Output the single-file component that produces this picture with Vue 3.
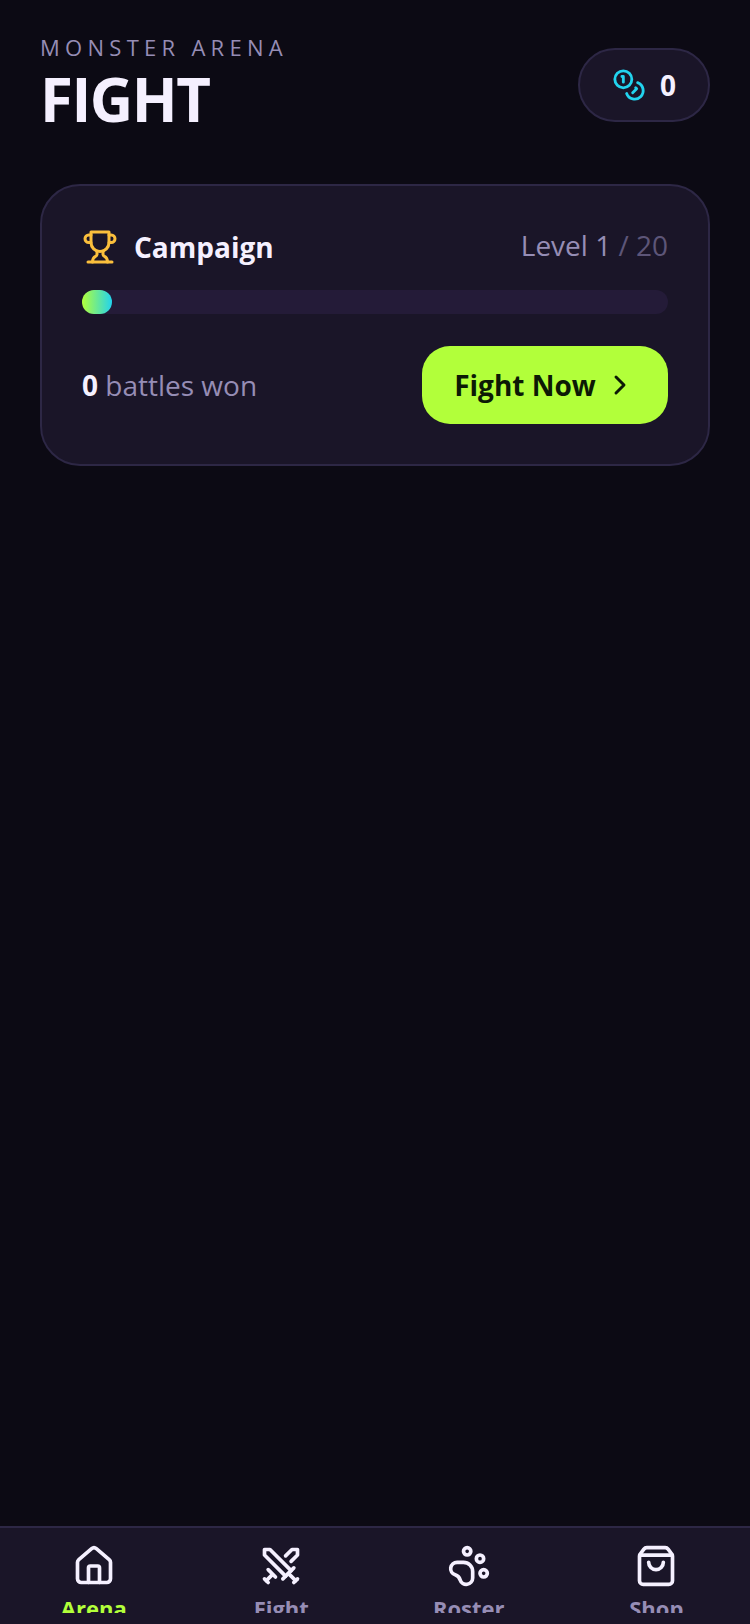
<script setup>
const tabs = [
  { label: "Arena", icon: "home", active: true },
  { label: "Fight", icon: "swords" },
  { label: "Roster", icon: "paw" },
  { label: "Shop", icon: "bag" },
];
</script>

<template>
  <div class="page">
    <main class="main">
      <header class="head">
        <div>
          <div class="eyebrow">MONSTER ARENA</div>
          <h1 class="title">FIGHT</h1>
        </div>
        <div class="coins">
          <svg class="coin-icon" viewBox="0 0 24 24" fill="none" stroke="currentColor" stroke-width="2" stroke-linecap="round" stroke-linejoin="round">
            <circle cx="8" cy="8" r="6" />
            <path d="M18.09 10.37A6 6 0 1 1 10.34 18" />
            <path d="M7 6h1v4" />
            <path d="m16.71 13.88.7.71-2.82 2.82" />
          </svg>
          <span>0</span>
        </div>
      </header>

      <section class="card">
        <div class="card-top">
          <div class="campaign">
            <svg class="trophy" viewBox="0 0 24 24" fill="none" stroke="currentColor" stroke-width="2" stroke-linecap="round" stroke-linejoin="round">
              <path d="M6 9H4.5a2.5 2.5 0 0 1 0-5H6" />
              <path d="M18 9h1.5a2.5 2.5 0 0 0 0-5H18" />
              <path d="M4 22h16" />
              <path d="M10 14.66V17c0 .55-.47.98-.97 1.21C7.85 18.75 7 20.24 7 22" />
              <path d="M14 14.66V17c0 .55.47.98.97 1.21C16.15 18.75 17 20.24 17 22" />
              <path d="M18 2H6v7a6 6 0 0 0 12 0V2Z" />
            </svg>
            <span>Campaign</span>
          </div>
          <div class="level">Level 1 <span class="of">/ 20</span></div>
        </div>

        <div class="track"><div class="fill"></div></div>

        <div class="card-bottom">
          <div class="won"><b>0</b> battles won</div>
          <button class="fight-btn">
            Fight Now
            <svg class="chev" viewBox="0 0 24 24" fill="none" stroke="currentColor" stroke-width="2.2" stroke-linecap="round" stroke-linejoin="round">
              <path d="m9 18 6-6-6-6" />
            </svg>
          </button>
        </div>
      </section>
    </main>

    <nav class="nav">
      <div class="tabs">
        <div v-for="tab in tabs" :key="tab.label" class="tab" :class="{ active: tab.active }">
          <svg class="tab-icon" viewBox="0 0 24 24" fill="none" stroke="currentColor" stroke-width="2" stroke-linecap="round" stroke-linejoin="round">
            <template v-if="tab.icon === 'home'">
              <path d="M15 21v-8a1 1 0 0 0-1-1h-4a1 1 0 0 0-1 1v8" />
              <path d="M3 10a2 2 0 0 1 .709-1.528l7-5.999a2 2 0 0 1 2.582 0l7 5.999A2 2 0 0 1 21 10v9a2 2 0 0 1-2 2H5a2 2 0 0 1-2-2z" />
            </template>
            <template v-else-if="tab.icon === 'swords'">
              <polyline points="14.5 17.5 3 6 3 3 6 3 17.5 14.5" />
              <line x1="13" y1="19" x2="19" y2="13" />
              <line x1="16" y1="16" x2="20" y2="20" />
              <line x1="19" y1="21" x2="21" y2="19" />
              <polyline points="14.5 6.5 18 3 21 3 21 6 17.5 9.5" />
              <line x1="5" y1="14" x2="9" y2="18" />
              <line x1="7" y1="17" x2="4" y2="20" />
              <line x1="3" y1="19" x2="5" y2="21" />
            </template>
            <template v-else-if="tab.icon === 'paw'">
              <circle cx="11" cy="4" r="2" />
              <circle cx="18" cy="8" r="2" />
              <circle cx="20" cy="16" r="2" />
              <path d="M9 10a5 5 0 0 1 5 5v3.5a3.5 3.5 0 0 1-6.84 1.045Q6.52 17.48 4.46 16.84A3.5 3.5 0 0 1 5.5 10Z" />
            </template>
            <template v-else>
              <path d="M16 10a4 4 0 0 1-8 0" />
              <path d="M3.103 6.034h17.794" />
              <path d="M3.4 5.467a2 2 0 0 0-.4 1.2V20a2 2 0 0 0 2 2h14a2 2 0 0 0 2-2V6.667a2 2 0 0 0-.4-1.2l-2-2.667A2 2 0 0 0 17 2H7a2 2 0 0 0-1.6.8z" />
            </template>
          </svg>
          <span class="tab-label">{{ tab.label }}</span>
        </div>
      </div>
    </nav>
  </div>
</template>

<style>
html,
body {
  margin: 0;
  background: #0c0a14;
}
</style>

<style scoped>
.page {
  width: 750px;
  height: 1624px;
  display: flex;
  flex-direction: column;
  background: #0c0a14;
  font-family: "Open Sans", "Noto Sans", sans-serif;
  color: #f5f0ff;
  overflow: hidden;
}
.main {
  flex: 1;
  padding: 32px 40px 0;
}
.head {
  display: flex;
  justify-content: space-between;
  align-items: flex-start;
  height: 96px;
}
.eyebrow {
  font-size: 22px;
  line-height: 30px;
  letter-spacing: 5.28px;
  color: #968db5;
}
.title {
  margin: 4px 0 0;
  font-size: 60px;
  line-height: 66px;
  font-weight: 700;
  letter-spacing: -1.5px;
}
.coins {
  box-sizing: border-box;
  width: 132px;
  height: 74px;
  margin-top: 16px;
  display: flex;
  align-items: center;
  justify-content: center;
  gap: 14px;
  background: #1a1528;
  border: 2px solid #2d2745;
  border-radius: 37px;
  font-size: 28px;
  font-weight: 700;
}
.coin-icon {
  width: 34px;
  height: 34px;
  color: #22d3ee;
}
.card {
  box-sizing: border-box;
  height: 282px;
  margin-top: 56px;
  padding: 38px 40px;
  background: #1a1528;
  border: 2px solid #2d2745;
  border-radius: 40px;
}
.card-top {
  display: flex;
  justify-content: space-between;
  align-items: center;
  height: 44px;
}
.campaign {
  display: flex;
  align-items: center;
  gap: 16px;
  padding-top: 2px;
  font-size: 28px;
  font-weight: 700;
}
.trophy {
  width: 36px;
  height: 36px;
  color: #fbbf3c;
}
.level {
  padding-bottom: 2px;
  font-size: 28px;
  color: #968db5;
}
.of {
  color: #5d5578;
}
.track {
  height: 24px;
  margin-top: 22px;
  background: #241b38;
  border-radius: 12px;
}
.fill {
  width: 30px;
  height: 100%;
  background: linear-gradient(90deg, #b2ff3a, #22d3ee);
  border-radius: 12px;
}
.card-bottom {
  display: flex;
  justify-content: space-between;
  align-items: center;
  margin-top: 32px;
}
.won {
  font-size: 28px;
  color: #968db5;
}
.won b {
  color: #f5f0ff;
}
.fight-btn {
  width: 246px;
  height: 78px;
  display: flex;
  align-items: center;
  justify-content: center;
  gap: 8px;
  padding: 0;
  border: 0;
  border-radius: 28px;
  background: #b2ff3a;
  color: #0c1a05;
  font-family: inherit;
  font-size: 28px;
  font-weight: 700;
}
.chev {
  width: 32px;
  height: 32px;
}
.nav {
  box-sizing: border-box;
  height: 98px;
  padding-bottom: 11px;
  background: #1a1528;
  border-top: 2px solid #2d2745;
}
.tabs {
  display: grid;
  grid-template-columns: repeat(4, 1fr);
  height: 85px;
  overflow: hidden;
}
.tab {
  display: flex;
  flex-direction: column;
  align-items: center;
  padding-top: 16px;
  color: #968db5;
}
.tab-icon {
  width: 44px;
  height: 44px;
  color: #f5f0ff;
}
.tab-label {
  margin-top: 5px;
  font-size: 22px;
  line-height: 30px;
  font-weight: 700;
}
.tab.active .tab-label {
  color: #b2ff3a;
}
</style>
